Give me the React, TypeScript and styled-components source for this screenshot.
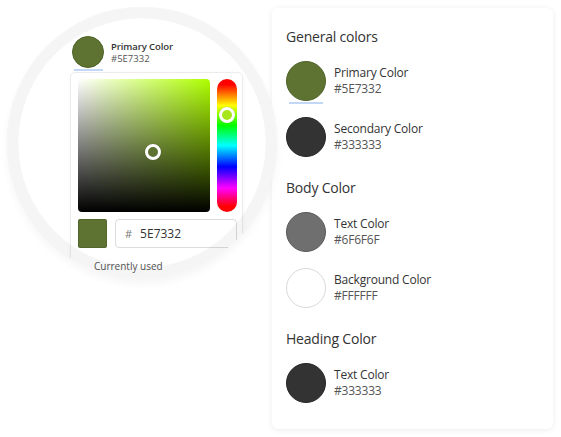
import React from "react";
import styled, { createGlobalStyle } from "styled-components";

const Global = createGlobalStyle`
  html, body { margin: 0; padding: 0; background: #ffffff; }
  body { font-family: "Open Sans", "Noto Sans", sans-serif; color: #333333; }
`;

const Page = styled.div`
  display: flex;
  align-items: flex-start;
  padding: 7px 0 0 7px;
  width: 561px;
  height: 437px;
  box-sizing: border-box;
`;

const Lens = styled.div`
  position: relative;
  z-index: 2;
  flex-shrink: 0;
  width: 270px;
  height: 272px;
  border-radius: 50%;
  background: #ffffff;
  overflow: hidden;
  box-sizing: border-box;
  padding: 29px 0 0 63px;
  box-shadow: 0 0 1px rgba(0, 0, 0, 0.08), 0 5px 8px rgba(0, 0, 0, 0.04);
  &::after {
    content: "";
    position: absolute;
    inset: 0;
    border-radius: 50%;
    border: 11px solid rgba(0, 0, 0, 0.04);
    box-shadow: inset 0 0 1px rgba(0, 0, 0, 0.08);
    pointer-events: none;
  }
`;

const LensHeader = styled.div`
  display: flex;
  align-items: flex-start;
  gap: 7px;
  margin-left: 2px;
`;

const SwatchCol = styled.div`
  display: flex;
  flex-direction: column;
  align-items: center;
`;

const Dot = styled.div<{ $c: string; $size: number; $border?: string }>`
  width: ${(p) => p.$size}px;
  height: ${(p) => p.$size}px;
  border-radius: 50%;
  background: ${(p) => p.$c};
  box-sizing: border-box;
  border: 1px solid ${(p) => p.$border || "rgba(0,0,0,0.15)"};
`;

const Underline = styled.div<{ $w: number }>`
  width: ${(p) => p.$w}px;
  height: 1.5px;
  margin-top: 1px;
  margin-bottom: -2.5px;
  background: #c3d7f7;
`;

const LensText = styled.div`
  margin-top: 5px;
  display: flex;
  flex-direction: column;
  gap: 1px;
  font-size: 9.5px;
  line-height: 11px;
`;

const LensTitle = styled.span`
  font-weight: 600;
  color: #333333;
  letter-spacing: -0.1px;
`;

const LensHex = styled.span`
  color: #555555;
`;

const PickerCard = styled.div`
  margin-top: 4px;
  width: 173px;
  box-sizing: border-box;
  border: 1px solid #ececec;
  border-radius: 5px;
  padding: 6px 5px 40px 7px;
  background: #ffffff;
  box-shadow: 0 1px 4px rgba(0, 0, 0, 0.04);
`;

const PickerTop = styled.div`
  display: flex;
  gap: 7px;
`;

const SatArea = styled.div`
  position: relative;
  width: 132px;
  height: 133px;
  border-radius: 4px;
  background: linear-gradient(to top, #000000, rgba(0, 0, 0, 0)),
    linear-gradient(to right, #ffffff, hsl(79, 100%, 50%));
`;

const Thumb = styled.div<{ $c: string }>`
  position: absolute;
  width: 16px;
  height: 16px;
  box-sizing: border-box;
  border-radius: 50%;
  border: 3px solid #ffffff;
  background: ${(p) => p.$c};
  transform: translate(-50%, -50%);
  box-shadow: 0 0 1px rgba(0, 0, 0, 0.3);
`;

const HueBar = styled.div`
  position: relative;
  width: 20px;
  height: 133px;
  border-radius: 10px;
  background: linear-gradient(
    to bottom,
    #ff0000 0%,
    #ff0000 4%,
    #ffff00 20%,
    #00ff00 35%,
    #00ffff 50%,
    #0000ff 66%,
    #ff00ff 82%,
    #ff0000 96%,
    #ff0000 100%
  );
`;

const PickerBottom = styled.div`
  display: flex;
  gap: 8px;
  margin-top: 7px;
`;

const SquareSwatch = styled.div<{ $c: string }>`
  width: 29px;
  height: 29px;
  border-radius: 2px;
  background: ${(p) => p.$c};
  box-sizing: border-box;
  border: 1px solid rgba(0, 0, 0, 0.12);
`;

const HexInput = styled.div`
  flex: 1;
  height: 29px;
  box-sizing: border-box;
  border: 1px solid #dcdcdc;
  border-radius: 4px;
  display: flex;
  align-items: center;
  padding-left: 9px;
  gap: 8px;
  font-size: 12px;
`;

const Hash = styled.span`
  color: #777777;
  font-size: 11px;
`;

const HexValue = styled.span`
  color: #333333;
`;

const UsedLabel = styled.div`
  margin-top: 11px;
  padding-left: 16px;
  font-size: 10px;
  line-height: 14px;
  color: #555555;
`;

const Card = styled.div`
  position: relative;
  z-index: 1;
  margin: 1px 0 0 -5px;
  width: 281px;
  height: 421px;
  box-sizing: border-box;
  border-radius: 6px;
  background: #ffffff;
  box-shadow: 0 1px 6px rgba(0, 0, 0, 0.08);
  padding: 19px 14px 0 14px;
  display: flex;
  flex-direction: column;
`;

const Section = styled.div<{ $first?: boolean }>`
  display: flex;
  flex-direction: column;
  margin-top: ${(p) => (p.$first ? 0 : 21)}px;
`;

const Heading = styled.div`
  font-size: 14px;
  line-height: 20px;
  font-weight: 500;
  color: #333333;
  margin-bottom: 14px;
  letter-spacing: -0.2px;
`;

const Rows = styled.div`
  display: flex;
  flex-direction: column;
  gap: 16px;
`;

const Row = styled.div`
  display: flex;
  align-items: flex-start;
  gap: 8px;
`;

const RowText = styled.div`
  margin-top: 4px;
  display: flex;
  flex-direction: column;
  font-size: 12px;
  line-height: 16px;
  letter-spacing: -0.2px;
`;

const RowTitle = styled.span`
  font-weight: 500;
  color: #333333;
`;

const RowHex = styled.span`
  color: #555555;
`;

type Item = { name: string; hex: string; border?: string; active?: boolean };

const sections: { title: string; items: Item[] }[] = [
  {
    title: "General colors",
    items: [
      { name: "Primary Color", hex: "#5E7332", active: true, border: "#4f6329" },
      { name: "Secondary Color", hex: "#333333", border: "#262626" },
    ],
  },
  {
    title: "Body Color",
    items: [
      { name: "Text Color", hex: "#6F6F6F", border: "#5a5a5a" },
      { name: "Background Color", hex: "#FFFFFF", border: "#d9d9d9" },
    ],
  },
  {
    title: "Heading Color",
    items: [{ name: "Text Color", hex: "#333333", border: "#262626" }],
  },
];

export default function App() {
  return (
    <>
      <Global />
      <Page>
        <Lens>
          <LensHeader>
            <SwatchCol>
              <Dot $c="#5E7332" $size={32} $border="#4f6329" />
              <Underline $w={29} />
            </SwatchCol>
            <LensText>
              <LensTitle>Primary Color</LensTitle>
              <LensHex>#5E7332</LensHex>
            </LensText>
          </LensHeader>
          <PickerCard>
            <PickerTop>
              <SatArea>
                <Thumb $c="#5E7332" style={{ left: "56.5%", top: "55%" }} />
              </SatArea>
              <HueBar>
                <Thumb $c="#a6e61a" style={{ left: "50%", top: "36px" }} />
              </HueBar>
            </PickerTop>
            <PickerBottom>
              <SquareSwatch $c="#5E7332" />
              <HexInput>
                <Hash>#</Hash>
                <HexValue>5E7332</HexValue>
              </HexInput>
            </PickerBottom>
            <UsedLabel>Currently used</UsedLabel>
          </PickerCard>
        </Lens>
        <Card>
          {sections.map((s, i) => (
            <Section key={s.title} $first={i === 0}>
              <Heading>{s.title}</Heading>
              <Rows>
                {s.items.map((it) => (
                  <Row key={it.name + it.hex}>
                    <SwatchCol>
                      <Dot $c={it.hex} $size={40} $border={it.border} />
                      {it.active && <Underline $w={34} />}
                    </SwatchCol>
                    <RowText>
                      <RowTitle>{it.name}</RowTitle>
                      <RowHex>{it.hex}</RowHex>
                    </RowText>
                  </Row>
                ))}
              </Rows>
            </Section>
          ))}
        </Card>
      </Page>
    </>
  );
}
